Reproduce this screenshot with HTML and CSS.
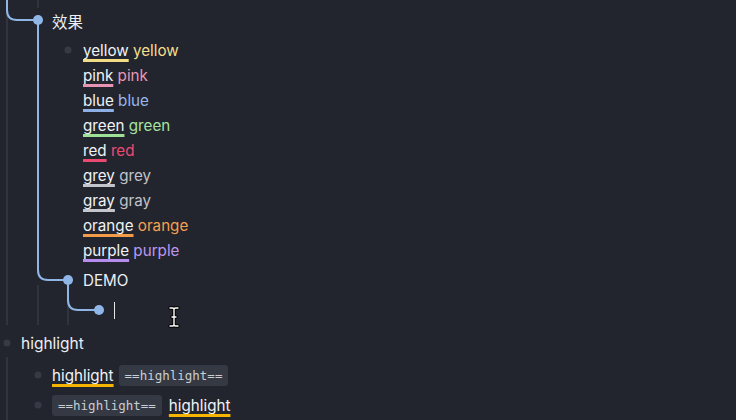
FILE: index.html
```html
<!DOCTYPE html>
<html>
<head>
<meta charset="utf-8">
<link rel="stylesheet" href="styles.css">
</head>
<body>
<div class="page">
  <svg class="tree" width="736" height="420" viewBox="0 0 736 420">
    <g stroke="#30343d" stroke-width="2" fill="none">
      <path d="M7 0 V325"/>
      <path d="M38 0 V8"/>
      <path d="M38 285 V325"/>
      <path d="M68 290 V325"/>
      <path d="M7 357 V420"/>
    </g>
    <g stroke="#8fb6e6" stroke-width="2" fill="none">
      <path d="M7 0 V10 Q7 20 17 20 H38"/>
      <path d="M38 20 V270 Q38 280 48 280 H68"/>
      <path d="M68 280 V300 Q68 310 78 310 H99"/>
    </g>
    <g fill="#8fb6e6">
      <circle cx="38" cy="20" r="5"/>
      <circle cx="68" cy="280" r="5"/>
      <circle cx="99" cy="310" r="5"/>
    </g>
    <g fill="#363a44">
      <circle cx="68" cy="50" r="3.5"/>
      <circle cx="7" cy="343" r="3.5"/>
      <circle cx="38" cy="375" r="3.5"/>
      <circle cx="38" cy="405" r="3.5"/>
    </g>
  </svg>

  <div class="row r-head lvl1">效果</div>
  <div class="list lvl2">
    <div class="line"><span class="u u-yellow">yellow</span> <span class="c-yellow">yellow</span></div>
    <div class="line"><span class="u u-pink">pink</span> <span class="c-pink">pink</span></div>
    <div class="line"><span class="u u-blue">blue</span> <span class="c-blue">blue</span></div>
    <div class="line"><span class="u u-green">green</span> <span class="c-green">green</span></div>
    <div class="line"><span class="u u-red">red</span> <span class="c-red">red</span></div>
    <div class="line"><span class="u u-grey">grey</span> <span class="c-grey">grey</span></div>
    <div class="line"><span class="u u-grey">gray</span> <span class="c-grey">gray</span></div>
    <div class="line"><span class="u u-orange">orange</span> <span class="c-orange">orange</span></div>
    <div class="line"><span class="u u-purple">purple</span> <span class="c-purple">purple</span></div>
  </div>
  <div class="row r-demo lvl2">DEMO</div>
  <div class="row r-cursor lvl3"><span class="caret"></span><svg class="ibeam" width="12" height="22" viewBox="0 0 12 22"><path d="M2 2 H4.5 Q6 2 6 3.5 Q6 2 7.5 2 H10 M6 3.5 V18.5 M2 20 H4.5 Q6 20 6 18.5 Q6 20 7.5 20 H10 M4 11 H8" stroke="#000" stroke-width="3.4" fill="none" stroke-linecap="round" stroke-linejoin="round"/><path d="M2 2 H4.5 Q6 2 6 3.5 Q6 2 7.5 2 H10 M6 3.5 V18.5 M2 20 H4.5 Q6 20 6 18.5 Q6 20 7.5 20 H10 M4 11 H8" stroke="#fff" stroke-width="1.4" fill="none" stroke-linecap="round" stroke-linejoin="round"/></svg></div>
  <div class="row r-hl lvl0">highlight</div>
  <div class="row r-s1 lvl1"><span class="u u-amber">highlight</span><code class="chip">==highlight==</code></div>
  <div class="row r-s2 lvl1"><code class="chip">==highlight==</code><span class="u u-amber">highlight</span></div>
</div>
</body>
</html>
```
FILE: styles.css
```css
html, body {
  margin: 0;
  padding: 0;
  background: #22252e;
}
.page {
  position: relative;
  width: 736px;
  height: 420px;
  overflow: hidden;
  padding-top: 5px;
  box-sizing: border-box;
  font-family: Inter, "Noto Sans CJK SC", sans-serif;
  font-size: 15.2px;
  color: #eceef2;
}
.tree {
  position: absolute;
  left: 0;
  top: 0;
}
.row {
  display: flex;
  align-items: center;
  position: relative;
}
.lvl0 { padding-left: 21px; }
.lvl1 { padding-left: 52px; }
.lvl2 { padding-left: 83px; }
.lvl3 { padding-left: 114px; }
.r-head { height: 32.5px; font-size: 15.5px; }
.list { position: relative; }
.line { height: 25px; line-height: 25px; white-space: nowrap; }
.r-demo { height: 35px; }
.r-cursor { height: 27.5px; }
.r-hl { height: 36px; font-size: 15.5px; }
.r-s1 { height: 28px; gap: 5px; }
.r-s2 { height: 32px; gap: 7px; }
.u {
  text-decoration-line: underline;
  text-decoration-thickness: 3px;
  text-underline-offset: 3px;
  text-decoration-skip-ink: none;
  color: #f0f2f5;
}
.u-yellow { text-decoration-color: #f3dc86; }
.u-pink { text-decoration-color: #e793b4; }
.u-blue { text-decoration-color: #8eaee6; }
.u-green { text-decoration-color: #9fe098; }
.u-red { text-decoration-color: #ea4a72; }
.u-grey { text-decoration-color: #c2c5cb; }
.u-orange { text-decoration-color: #f29c4a; }
.u-purple { text-decoration-color: #b68cef; }
.u-amber { text-decoration-color: #f5b400; }
.c-yellow { color: #f5df8c; }
.c-pink { color: #e797b7; }
.c-blue { color: #98b6ec; }
.c-green { color: #a6e3a0; }
.c-red { color: #ec4a73; }
.c-grey { color: #c0c3c9; }
.c-orange { color: #f5a04e; }
.c-purple { color: #bd97ef; }
.chip {
  display: inline-block;
  font-family: "DejaVu Sans Mono", "Liberation Mono", monospace;
  font-size: 12.5px;
  background: #343943;
  color: #c9cdd4;
  border-radius: 3px;
  padding: 0 6px;
  height: 21px;
  line-height: 21px;
}
.caret {
  display: block;
  width: 1px;
  height: 17px;
  background: #e4e6ea;
  margin-top: -1px;
}
.ibeam {
  position: absolute;
  left: 168px;
  top: 8px;
}
```
